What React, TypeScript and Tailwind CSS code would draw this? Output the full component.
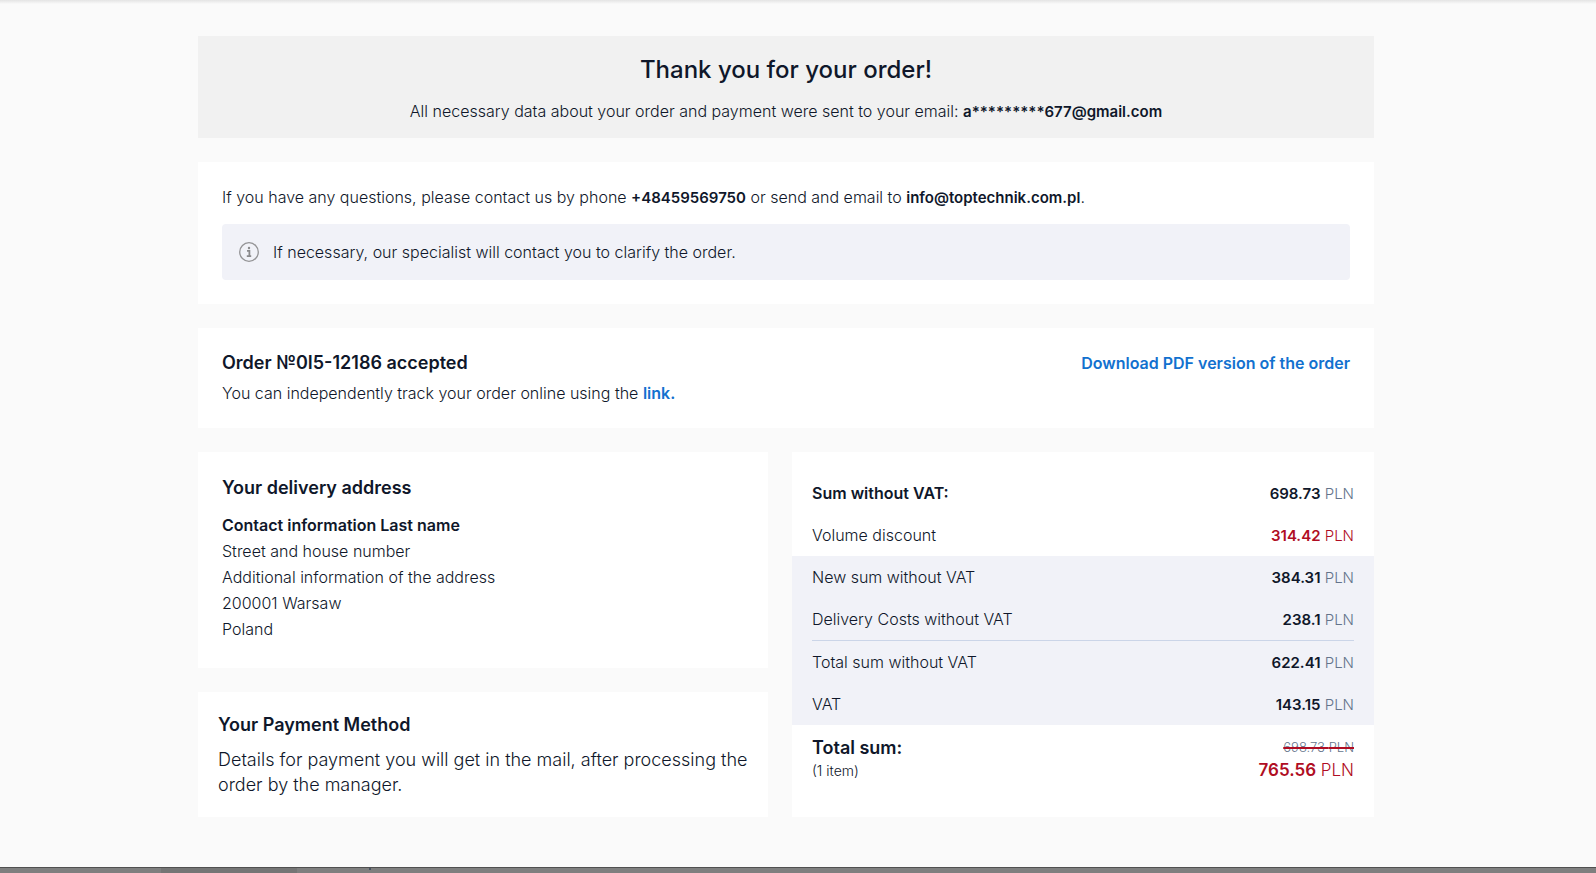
import clsx from "clsx";

interface SumRow {
  label: string;
  value: string;
  strong?: boolean;
  discount?: boolean;
  divider?: boolean;
}

const CURRENCY = "PLN";

const baseRows: SumRow[] = [
  { label: "Sum without VAT:", value: "698.73", strong: true },
  { label: "Volume discount", value: "314.42", discount: true },
];

const totalRows: SumRow[] = [
  { label: "New sum without VAT", value: "384.31" },
  { label: "Delivery Costs without VAT", value: "238.1" },
  { label: "Total sum without VAT", value: "622.41", divider: true },
  { label: "VAT", value: "143.15" },
];

const addressLines = [
  "Street and house number",
  "Additional information of the address",
  "200001 Warsaw",
  "Poland",
];

function InfoIcon() {
  return (
    <svg
      className="h-5 w-5 shrink-0"
      viewBox="0 0 20 20"
      fill="none"
      aria-hidden="true"
    >
      <circle cx="10" cy="10" r="9.3" stroke="#949496" strokeWidth="1.3" />
      <circle cx="10" cy="6" r="1.2" fill="#8a8a8c" />
      <path
        d="M8 8.8h2.4v5M7.8 14.2h4.4"
        stroke="#8a8a8c"
        strokeWidth="1.8"
      />
    </svg>
  );
}

function Row({ label, value, strong, discount, divider }: SumRow) {
  const line = divider && "border-t border-[#cbd5e8]";

  return (
    <tr>
      <th
        scope="row"
        className={clsx(
          "p-0 pl-5 text-left",
          strong ? "font-semibold" : "font-light",
        )}
      >
        <div className={clsx("py-[9px]", line)}>{label}</div>
      </th>
      <td className="p-0 pr-5 text-right text-[15px]">
        <div className={clsx("pt-2.5 pb-2", line, discount && "text-[#b00d23]")}>
          <span className="font-semibold">{value}</span>{" "}
          <span className={clsx("font-light", !discount && "text-[#64748b]")}>
            {CURRENCY}
          </span>
        </div>
      </td>
    </tr>
  );
}

export default function App() {
  return (
    <div className="flex min-h-screen flex-col bg-[#fafafa] font-['Inter',sans-serif] text-base leading-6 font-light text-[#0f172a]">
      <div className="h-1 bg-linear-to-b from-[#e4e4e4] to-[#fafafa]" />

      <main className="grow pt-8 pr-6 pb-12">
        <div className="mx-auto flex max-w-[1176px] flex-col gap-6">
          <header className="bg-[#f1f1f1] px-6 pt-[18px] pb-[15px] text-center">
            <h1 className="text-2xl leading-8 font-medium">
              Thank you for your order!
            </h1>
            <p className="mt-[13px]">
              All necessary data about your order and payment were sent to your
              email:{" "}
              <b className="text-[15px] leading-none font-semibold">
                a*********677@gmail.com
              </b>
            </p>
          </header>

          <section className="bg-white p-6 pt-[23px]">
            <p>
              If you have any questions, please contact us by phone{" "}
              <a
                href="tel:+48459569750"
                className="text-[15px] leading-none font-semibold"
              >
                +48459569750
              </a>{" "}
              or send and email to{" "}
              <a
                href="mailto:info@toptechnik.com.pl"
                className="text-[15px] leading-none font-semibold"
              >
                info@toptechnik.com.pl
              </a>
              .
            </p>
            <div className="mt-[15px] flex items-center gap-3.5 rounded bg-[#f1f2f8] px-[17px] py-4">
              <InfoIcon />
              <p>
                If necessary, our specialist will contact you to clarify the
                order.
              </p>
            </div>
          </section>

          <section className="flex items-start justify-between bg-white px-6 py-[23px]">
            <div>
              <h2 className="text-lg leading-6 font-semibold">
                Order №0I5-12186 accepted
              </h2>
              <p className="mt-1.5">
                You can independently track your order online using the{" "}
                <a href="#track" className="font-semibold text-[#1271cf]">
                  link.
                </a>
              </p>
            </div>
            <a href="#pdf" className="font-semibold text-[#1271cf]">
              Download PDF version of the order
            </a>
          </section>

          <div className="flex gap-6">
            <div className="flex w-[570px] shrink-0 flex-col gap-6">
              <section className="bg-white px-6 pt-6 pb-[26px]">
                <h2 className="text-lg leading-6 font-semibold">
                  Your delivery address
                </h2>
                <address className="mt-3 leading-[26px] not-italic">
                  <p className="font-semibold">
                    Contact information Last name
                  </p>
                  {addressLines.map((text) => (
                    <p key={text}>{text}</p>
                  ))}
                </address>
              </section>

              <section className="bg-white p-5 pt-[21px]">
                <h2 className="text-lg leading-6 font-semibold">
                  Your Payment Method
                </h2>
                <p className="mt-2.5 text-lg leading-[25px]">
                  Details for payment you will get in the mail, after processing
                  the order by the manager.
                </p>
              </section>
            </div>

            <section className="grow bg-white pt-5">
              <table className="w-full border-collapse">
                <tbody>
                  {baseRows.map((row) => (
                    <Row key={row.label} {...row} />
                  ))}
                </tbody>
                <tbody className="bg-[#f1f2f8]">
                  {totalRows.map((row) => (
                    <Row key={row.label} {...row} />
                  ))}
                </tbody>
                <tfoot>
                  <tr>
                    <th scope="row" className="p-0 pt-[11px] pl-5 text-left">
                      <p className="text-lg leading-6 font-semibold">
                        Total sum:
                      </p>
                      <p className="text-sm leading-[22px] font-light">
                        (1 item)
                      </p>
                    </th>
                    <td className="p-0 pt-[11px] pr-5 text-right">
                      <p className="text-[13px] leading-[22px] text-[#64748b]">
                        <s className="decoration-[#b00d23] decoration-2">
                          698.73 {CURRENCY}
                        </s>
                      </p>
                      <p className="text-[17px] leading-6 text-[#b00d23]">
                        <span className="font-semibold">765.56</span>{" "}
                        {CURRENCY}
                      </p>
                    </td>
                  </tr>
                </tfoot>
              </table>
            </section>
          </div>
        </div>
      </main>

      <footer className="flex h-1.5 border-t border-[#505050] bg-[#7f7f7f]">
        <div className="ml-[161px] w-[136px] bg-[#757575]" />
        <div className="ml-[72px] h-0.5 w-0.5 bg-[#4b5563]" />
      </footer>
    </div>
  );
}
